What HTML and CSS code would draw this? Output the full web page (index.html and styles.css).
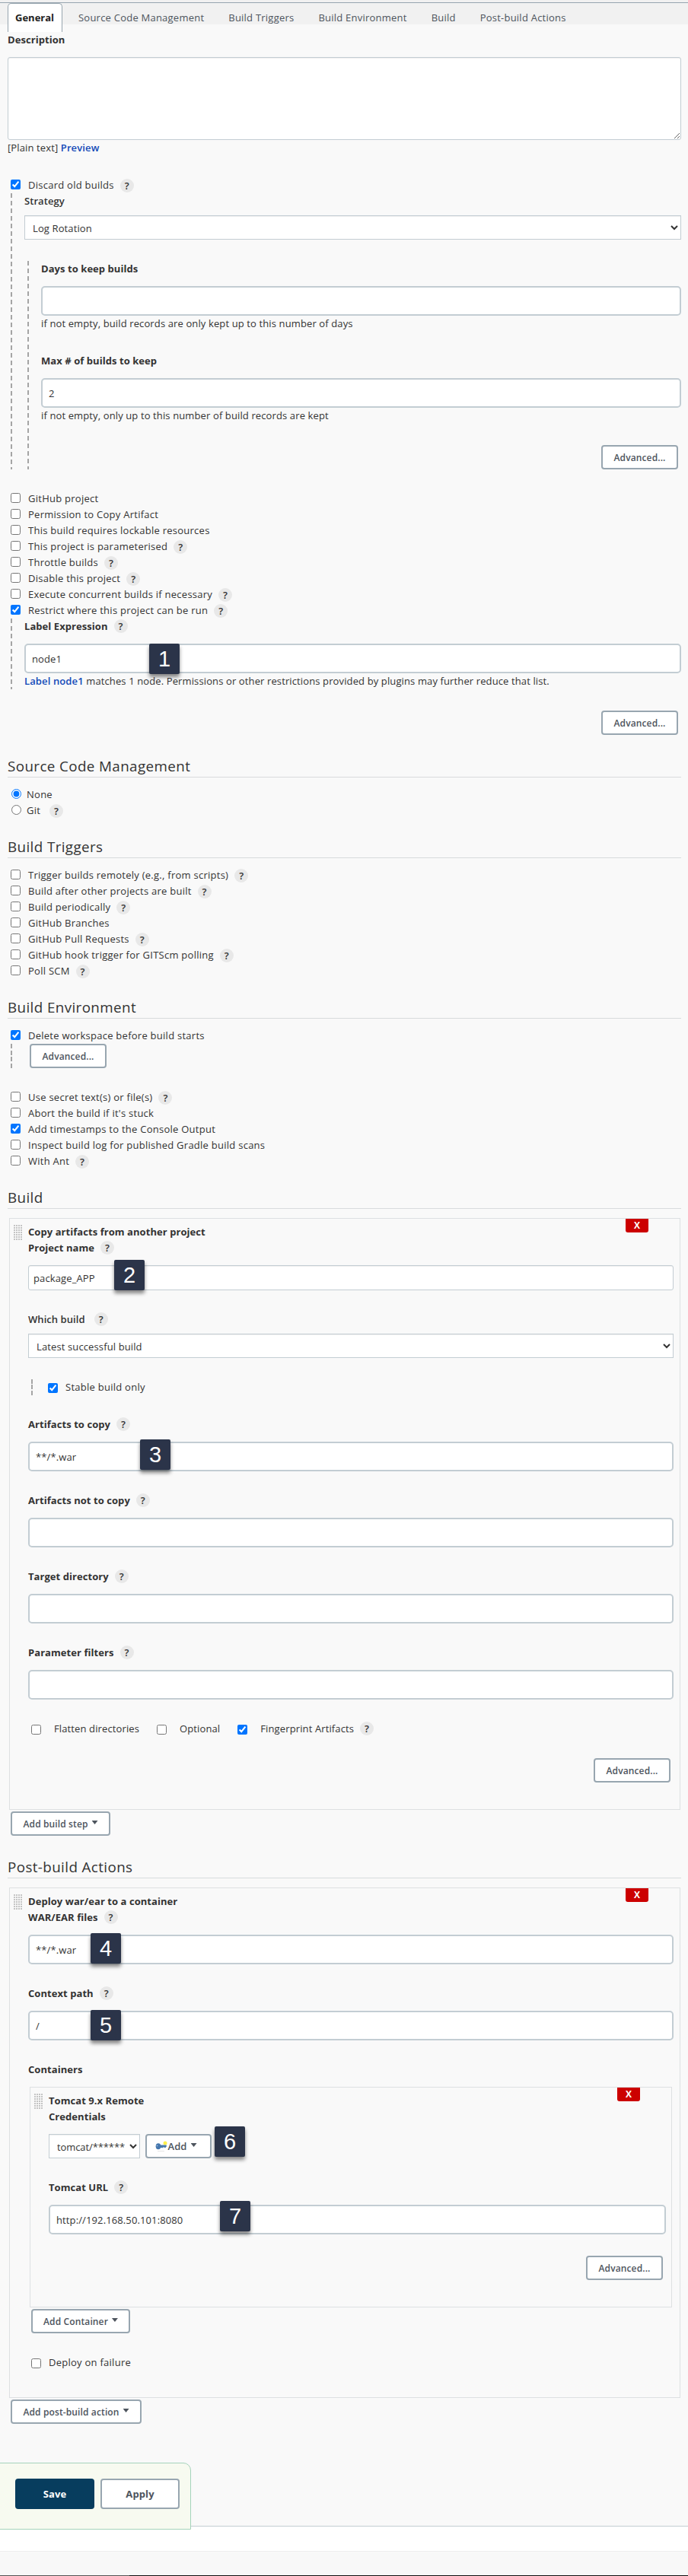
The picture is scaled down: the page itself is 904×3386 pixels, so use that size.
FILE: index.html
```html
<!DOCTYPE html>
<html lang="en">
<head>
<meta charset="utf-8">
<title>Job configuration</title>
<link rel="stylesheet" href="styles.css">
</head>
<body>
<nav class="tabs">
  <a class="tab active">General</a><a class="tab">Source Code Management</a><a class="tab">Build Triggers</a><a class="tab">Build Environment</a><a class="tab">Build</a><a class="tab">Post-build Actions</a>
</nav>
<main class="config">
  <div class="field">
    <div class="label">Description</div>
    <textarea class="area"></textarea>
    <div class="hint">[Plain text] <a class="link">Preview</a></div>
  </div>

  <label class="row"><input type="checkbox" checked><span>Discard old builds</span><i class="help">?</i></label>
  <div class="nested">
    <div class="label medium">Strategy</div>
    <select class="select"><option>Log Rotation</option></select>
    <div class="nested inner">
      <div class="field">
        <div class="label">Days to keep builds</div>
        <input class="text" type="text">
        <div class="hint">if not empty, build records are only kept up to this number of days</div>
      </div>
      <div class="field">
        <div class="label">Max # of builds to keep</div>
        <input class="text" type="text" value="2">
        <div class="hint">if not empty, only up to this number of build records are kept</div>
      </div>
      <div class="advanced"><button class="btn">Advanced...</button></div>
    </div>
  </div>
  <div class="group">
    <label class="row"><input type="checkbox"><span>GitHub project</span></label>
    <label class="row"><input type="checkbox"><span>Permission to Copy Artifact</span></label>
    <label class="row"><input type="checkbox"><span>This build requires lockable resources</span></label>
    <label class="row"><input type="checkbox"><span>This project is parameterised</span><i class="help">?</i></label>
    <label class="row"><input type="checkbox"><span>Throttle builds</span><i class="help">?</i></label>
    <label class="row"><input type="checkbox"><span>Disable this project</span><i class="help">?</i></label>
    <label class="row"><input type="checkbox"><span>Execute concurrent builds if necessary</span><i class="help">?</i></label>
    <label class="row"><input type="checkbox" checked><span>Restrict where this project can be run</span><i class="help">?</i></label>
  </div>
  <div class="nested restrict">
    <div class="label">Label Expression<i class="help">?</i></div>
    <div class="control"><input class="text" type="text" value="node1"><b class="badge badge-1">1</b></div>
    <div class="hint"><a class="link">Label node1</a> matches 1 node. Permissions or other restrictions provided by plugins may further reduce that list.</div>
  </div>
  <div class="advanced"><button class="btn">Advanced...</button></div>

  <h2 class="section">Source Code Management</h2>
  <label class="row radio"><input type="radio" name="scm" checked><span>None</span></label>
  <label class="row radio"><input type="radio" name="scm"><span>Git</span><i class="help">?</i></label>

  <h2 class="section">Build Triggers</h2>
  <label class="row"><input type="checkbox"><span>Trigger builds remotely (e.g., from scripts)</span><i class="help">?</i></label>
  <label class="row"><input type="checkbox"><span>Build after other projects are built</span><i class="help">?</i></label>
  <label class="row"><input type="checkbox"><span>Build periodically</span><i class="help">?</i></label>
  <label class="row"><input type="checkbox"><span>GitHub Branches</span></label>
  <label class="row"><input type="checkbox"><span>GitHub Pull Requests</span><i class="help">?</i></label>
  <label class="row"><input type="checkbox"><span>GitHub hook trigger for GITScm polling</span><i class="help">?</i></label>
  <label class="row"><input type="checkbox"><span>Poll SCM</span><i class="help">?</i></label>

  <h2 class="section">Build Environment</h2>
  <label class="row"><input type="checkbox" checked><span>Delete workspace before build starts</span></label>
  <div class="nested workspace"><button class="btn">Advanced...</button></div>
  <label class="row"><input type="checkbox"><span>Use secret text(s) or file(s)</span><i class="help">?</i></label>
  <label class="row"><input type="checkbox"><span>Abort the build if it's stuck</span></label>
  <label class="row"><input type="checkbox" checked><span>Add timestamps to the Console Output</span></label>
  <label class="row"><input type="checkbox"><span>Inspect build log for published Gradle build scans</span></label>
  <label class="row"><input type="checkbox"><span>With Ant</span><i class="help">?</i></label>

  <h2 class="section">Build</h2>
  <div class="step">
    <svg class="grip" width="12" height="21"><use href="#dots"/></svg>
    <button class="delete">X</button>
    <div class="label">Copy artifacts from another project</div>
    <div class="field">
      <div class="label">Project name<i class="help">?</i></div>
      <div class="control"><input class="text slim" type="text" value="package_APP"><b class="badge badge-2">2</b></div>
    </div>
    <div class="field">
      <div class="label medium wide-gap">Which build<i class="help">?</i></div>
      <select class="select"><option>Latest successful build</option></select>
    </div>
    <div class="nested stable"><label class="row"><input type="checkbox" checked><span>Stable build only</span></label></div>
    <div class="field">
      <div class="label">Artifacts to copy<i class="help">?</i></div>
      <div class="control"><input class="text" type="text" value="**/*.war"><b class="badge badge-3">3</b></div>
    </div>
    <div class="field">
      <div class="label">Artifacts not to copy<i class="help">?</i></div>
      <input class="text" type="text">
    </div>
    <div class="field">
      <div class="label">Target directory<i class="help">?</i></div>
      <input class="text" type="text">
    </div>
    <div class="field">
      <div class="label">Parameter filters<i class="help">?</i></div>
      <input class="text" type="text">
    </div>
    <div class="options">
      <label><input type="checkbox"><span>Flatten directories</span></label>
      <label><input type="checkbox"><span>Optional</span></label>
      <label><input type="checkbox" checked><span>Fingerprint Artifacts</span><i class="help">?</i></label>
    </div>
    <div class="advanced"><button class="btn">Advanced...</button></div>
  </div>
  <button class="btn menu add-step">Add build step<i class="caret"></i></button>

  <h2 class="section">Post-build Actions</h2>
  <div class="step">
    <svg class="grip" width="12" height="21"><use href="#dots"/></svg>
    <button class="delete">X</button>
    <div class="label">Deploy war/ear to a container</div>
    <div class="field">
      <div class="label">WAR/EAR files<i class="help">?</i></div>
      <div class="control"><input class="text" type="text" value="**/*.war"><b class="badge badge-4">4</b></div>
    </div>
    <div class="field">
      <div class="label">Context path<i class="help">?</i></div>
      <div class="control"><input class="text" type="text" value="/"><b class="badge badge-5">5</b></div>
    </div>
    <div class="label">Containers</div>
    <div class="step container">
      <svg class="grip" width="12" height="21"><use href="#dots"/></svg>
      <button class="delete">X</button>
      <div class="label">Tomcat 9.x Remote</div>
      <div class="field">
        <div class="label">Credentials</div>
        <div class="control credentials">
          <select class="select"><option>tomcat/******</option></select>
          <button class="btn menu key"><svg width="16" height="16" viewBox="0 0 16 16"><circle cx="13" cy="4" r="2.500" fill="#fff04a"/><path d="M6 6.500h8.500l.5 1.500-1.500 2h-1.500l-1-1-1 1.200L6 10z" fill="#4a7aab"/><ellipse cx="4" cy="8.200" rx="3.300" ry="4" fill="#4577ae"/><circle cx="2.500" cy="7.500" r=".8" fill="#b4cde6"/><path d="M3 14.500h9" stroke="#e5e5e5"/></svg>Add<i class="caret"></i></button>
          <b class="badge badge-6">6</b>
        </div>
      </div>
      <div class="field">
        <div class="label">Tomcat URL<i class="help">?</i></div>
        <div class="control"><input class="text" type="text" value="http://192.168.50.101:8080"><b class="badge badge-7">7</b></div>
      </div>
      <div class="advanced"><button class="btn">Advanced...</button></div>
    </div>
    <button class="btn menu add-container">Add Container<i class="caret"></i></button>
    <label class="row failure"><input type="checkbox"><span>Deploy on failure</span></label>
  </div>
  <button class="btn menu add-action">Add post-build action<i class="caret"></i></button>
  <div class="savebar"><button class="save">Save</button><button class="apply">Apply</button></div>
</main>
<footer class="footer"></footer>
<svg class="defs" width="0" height="0">
  <defs>
    <pattern id="dot" width="3" height="3" patternUnits="userSpaceOnUse"><rect width="2" height="2" fill="#c4c4c4"/></pattern>
    <g id="dots"><rect width="12" height="21" fill="url(#dot)"/></g>
  </defs>
</svg>
</body>
</html>
```

FILE: styles.css
```css
* { box-sizing: border-box; }
body {
  position: relative;
  margin: 0;
  height: 3386px;
  display: flex;
  flex-direction: column;
  background: #fff;
  color: #333;
  font: 13px/21px "Open Sans", "Noto Sans", sans-serif;
  letter-spacing: .12px;
}
input, select, textarea, button { font: inherit; color: inherit; letter-spacing: inherit; margin: 0; }
i { font-style: normal; }

/* tab strip */
.tabs {
  flex: none;
  display: flex;
  align-items: flex-start;
  height: 39px;
  margin-top: 3px;
  padding-left: 10px;
  border-top: 1px solid #97a5af;
  background: linear-gradient(#f1f1f1 28px, #f9f9f9 28px);
  box-shadow: 0 -3px 0 #f1f1f1;
}
.tab { height: 38px; padding: 9px 16px 0; line-height: 21px; color: #4d545d; white-space: nowrap; letter-spacing: .23px; }
.tab.active {
  width: 72px;
  padding: 8px 0 0 9px;
  margin-right: 5px;
  background: #fff;
  border: 1px solid #97a5af;
  border-bottom: 0;
  border-radius: 5px 5px 0 0;
  color: #222;
  font-weight: 700;
  letter-spacing: 0;
}

.config {
  position: relative;
  height: 3279px;
  flex: none;
  padding: 0 9px 0 10px;
  background: #f9f9f9;
  border-bottom: 1px solid #c3cdd3;
}
.label { display: flex; height: 21px; font-weight: 700; letter-spacing: .06px; white-space: nowrap; }
.label.medium { font-weight: 600; }
.field { margin-bottom: 28px; }
.hint { height: 21px; white-space: nowrap; }
.link { color: #1249b8; font-weight: 600; }
.help {
  width: 18px;
  height: 18px;
  margin: 1px 0 0 8px;
  border-radius: 50%;
  background: #e8e8e8;
  font-weight: 600;
  line-height: 18px;
  text-align: center;
}
.wide-gap .help { margin-left: 12px; }

.row { display: flex; height: 21px; padding-left: 4px; font-weight: 500; letter-spacing: .26px; white-space: nowrap; }
.row input { width: 13px; height: 13px; margin: 3px 10px 0 0; }
.row .help { margin-top: 2px; }
.row.radio { padding-left: 5px; font-weight: 400; }
.row.radio input { margin-right: 7px; }
.row.radio .help { margin-left: 12px; }

.area {
  display: block;
  width: 100%;
  height: 109px;
  margin-top: 12px;
  border: 1px solid #c3cdd3;
  border-radius: 3px;
  box-shadow: inset 0 1px 1px #0001;
}
.text {
  display: block;
  width: 100%;
  height: 39px;
  margin-top: 12px;
  padding: 0 8px;
  border: 2px solid #c3cdd3;
  border-radius: 5px;
  background: #fff;
}
.text.slim { height: 33px; padding: 0 6px; border-width: 1px; border-radius: 3px; box-shadow: inset 0 1px 1px #0001; }
.select {
  display: block;
  width: 100%;
  height: 32px;
  margin-top: 8px;
  padding: 2px 0 0 6px;
  border: 1px solid #c3cdd3;
  border-radius: 0;
  background: #fff;
  box-shadow: inset 0 1px 1px #0001;
}

/* nested options carry a dashed guide line */
.nested {
  position: relative;
  margin-bottom: 28px;
  margin-left: 4px;
  padding-left: 18px;
  background: repeating-linear-gradient(#a5a5a5 0 6px, transparent 6px 10px) 0 0 / 2px 100% no-repeat;
}
.nested.inner { margin: 28px 0 0 4px; padding-left: 18px; }
.nested.workspace { height: 32px; padding-left: 25px; background-image: repeating-linear-gradient(#a5a5a5 0 6px, transparent 6px 8.670px); }
.nested.stable { background-image: repeating-linear-gradient(#a5a5a5 0 6px, transparent 6px 7.500px); }

.btn {
  display: block;
  width: 101px;
  height: 32px;
  padding: 0;
  border: 2px solid #98a6b0;
  border-radius: 4px;
  background: #fff;
  color: #4d545d;
  font-size: 12px;
  font-weight: 600;
  white-space: nowrap;
}
.advanced { display: flex; justify-content: flex-end; height: 32px; margin-bottom: 28px; padding-right: 4px; }
.inner .advanced { margin-bottom: 0; }
.menu { display: flex; align-items: center; justify-content: center; }
.caret { width: 8px; height: 5px; margin: -3px 0 0 5px; background: #4d545d; clip-path: polygon(0 0, 100% 0, 50% 100%); }
.add-step { width: 131px; margin: 2px 0 28px 4px; }
.add-container { width: 130px; margin: 2px 0 28px 4px; }
.add-action { width: 172px; margin: 2px 0 0 4px; }

.section {
  height: 28px;
  margin: 24px 0 12px;
  border-bottom: 1px solid #d8dbdd;
  font-size: 18.8px;
  font-weight: 500;
  line-height: 26px;
  letter-spacing: .4px;
}

.step { position: relative; display: flow-root; margin: 0 1px 0 2px; padding: 7px 8px 7px 24px; border: 1px solid #dde0e2; }
.grip { position: absolute; left: 5px; top: 8px; }
.delete {
  position: absolute;
  top: 0;
  right: 41px;
  width: 30px;
  height: 18px;
  padding: 0;
  border: 0;
  border-radius: 0 0 3px 3px;
  background: #c00;
  color: #fff;
  font-size: 12px;
  font-weight: 700;
  line-height: 18px;
}
.step.container { margin: 12px 2px 0; padding-right: 7px; }
.failure { margin-bottom: 28px; }
.options { display: flex; gap: 23px; height: 21px; margin-bottom: 28px; padding-left: 4px; white-space: nowrap; }
.options label { display: flex; }
.options input { width: 13px; height: 13px; margin: 5px 17px 0 0; }
.stable .row input, .failure input { margin-top: 5px; }

.control { position: relative; }
.credentials { display: flex; gap: 7px; margin-top: 12px; }
.credentials .select { width: 120px; margin: 0; letter-spacing: -.1px; }
.key { width: 87px; padding-right: 6px; font-size: 13px; }

/* numbered callouts over the form */
.badge {
  position: absolute;
  width: 40px;
  height: 40px;
  border-radius: 2px;
  background: #2b3449;
  box-shadow: 0 4px 5px #0007;
  color: #fff;
  font: 29px/40px "Liberation Sans", sans-serif;
  text-align: center;
}
.badge-1 { left: 164px; top: 0; }
.badge-2 { left: 113px; top: -7px; }
.badge-3 { left: 147px; top: -3px; }
.badge-4 { left: 82px; top: -2px; }
.badge-5 { left: 82px; top: -1px; }
.badge-6 { left: 218px; top: -10px; }
.badge-7 { left: 225px; top: -5px; }

.savebar {
  position: absolute;
  left: -1px;
  bottom: -5px;
  width: 252px;
  height: 88px;
  display: flex;
  gap: 8px;
  padding: 20px 0 0 20px;
  border: 1px solid #a5d3bb;
  border-radius: 0 10px 0 0;
  background: #f7faf0;
}
.save, .apply { width: 104px; height: 40px; border: 0; border-radius: 4px; background: #073d5e; color: #fff; font-weight: 700; }
.apply { border: 2px solid #98a6b0; background: #fff; color: #4d545d; }
.footer {
  height: 33px;
  flex: none;
  margin-top: 32px;
  border-top: 1px solid #eee;
  background: linear-gradient(90deg, #555 170px, #111 170px) 0 100% / 100% 1px no-repeat #f8f8f8;
}
.defs { position: absolute; left: 0; top: 0; }
```
